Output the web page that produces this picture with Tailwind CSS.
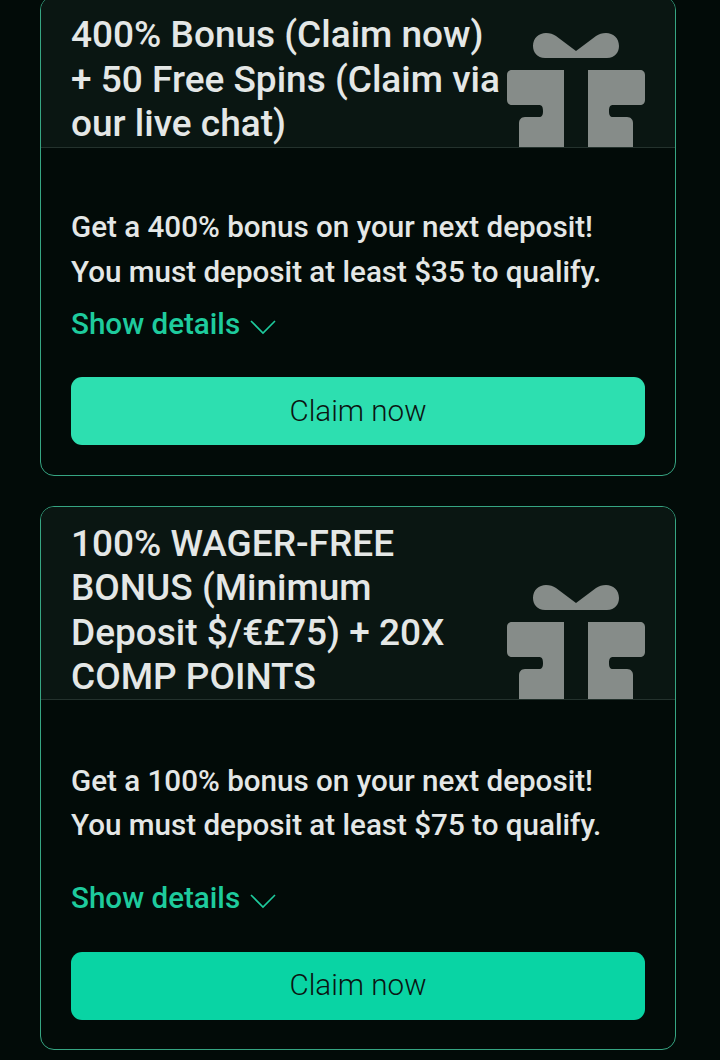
<!DOCTYPE html>
<html lang="en">
<head>
    <meta charset="UTF-8">
    <meta name="viewport" content="width=device-width, initial-scale=1.0">
    <title>Bonuses</title>
    <script src="https://cdn.jsdelivr.net/npm/@tailwindcss/browser@4"></script>
</head>
<body class="bg-[#020b08] font-['Roboto',sans-serif] text-[#e4e7e6]">
    <div class="h-[1060px] overflow-hidden px-[40px]">

        <!-- First bonus -->
        <div class="-mt-[4px] w-[636px] rounded-[14px] border border-[#36a582] overflow-hidden">
            <div class="flex items-end justify-between gap-[4px] bg-[#0a1612] border-b border-[#24322d] pl-[30px] pr-[30px] pt-[16px]">
                <h2 class="flex-1 text-[37px] leading-[44.5px] font-medium">400% Bonus (Claim now) + 50 Free Spins (Claim via our live chat)</h2>
                <svg class="w-[138px] h-[114px] shrink-0 block" viewBox="0 0 138 114" fill="#868c89">
                    <path d="M12 25 H38 L69 25 H100 C108 25 112 19 112 13 C112 5 106 0 99 0 C95 0 92 1 89 3 L69 18 L49 3 C46 1 43 0 39 0 C32 0 26 5 26 13 C26 19 30 25 38 25 Z"/>
                    <path d="M5 37 H57 V114 H12 V90 C12 87 14 84 18 84 H32 C35 84 36 82 36 78 C36 74 35 72 32 72 H5 C2 72 0 70 0 67 V42 C0 39 2 37 5 37 Z"/>
                    <path d="M133 37 H81 V114 H126 V90 C126 87 124 84 120 84 H106 C103 84 102 82 102 78 C102 74 103 72 106 72 H133 C136 72 138 70 138 67 V42 C138 39 136 37 133 37 Z"/>
                </svg>
            </div>
            <div class="px-[30px] pt-[57px] pb-[30px]">
                <p class="text-[29.6px] leading-[45px] font-medium">Get a 400% bonus on your next deposit!<br>You must deposit at least $35 to qualify.</p>
                <div class="mt-[7px] flex items-center gap-[10px] text-[#1ecb9d] text-[29.6px] leading-[45px] font-medium">
                    Show details
                    <svg class="w-[26px] h-[16px] mt-[5px]" viewBox="0 0 26 16" fill="none" stroke="currentColor" stroke-width="1.6"><path d="M1 2 L13 14 L25 2"/></svg>
                </div>
                <button class="mt-[30px] pt-[2px] block w-full h-[68px] rounded-[11px] bg-[#2ddfb0] text-[#0b1512] text-[29.6px] font-light">Claim now</button>
            </div>
        </div>

        <!-- Second bonus -->
        <div class="mt-[30px] w-[636px] rounded-[14px] border border-[#36a582] overflow-hidden">
            <div class="flex items-end justify-between gap-[4px] bg-[#0a1612] border-b border-[#24322d] pl-[30px] pr-[30px] pt-[15px]">
                <h2 class="flex-1 -mb-[1px] text-[37px] leading-[44.6px] font-medium">100% WAGER-FREE BONUS (Minimum Deposit $/€£75) + 20X COMP POINTS</h2>
                <svg class="w-[138px] h-[114px] shrink-0 block" viewBox="0 0 138 114" fill="#868c89">
                    <path d="M12 25 H38 L69 25 H100 C108 25 112 19 112 13 C112 5 106 0 99 0 C95 0 92 1 89 3 L69 18 L49 3 C46 1 43 0 39 0 C32 0 26 5 26 13 C26 19 30 25 38 25 Z"/>
                    <path d="M5 37 H57 V114 H12 V90 C12 87 14 84 18 84 H32 C35 84 36 82 36 78 C36 74 35 72 32 72 H5 C2 72 0 70 0 67 V42 C0 39 2 37 5 37 Z"/>
                    <path d="M133 37 H81 V114 H126 V90 C126 87 124 84 120 84 H106 C103 84 102 82 102 78 C102 74 103 72 106 72 H133 C136 72 138 70 138 67 V42 C138 39 136 37 133 37 Z"/>
                </svg>
            </div>
            <div class="px-[30px] pt-[59px] pb-[29px]">
                <p class="text-[29.6px] leading-[44.5px] font-medium">Get a 100% bonus on your next deposit!<br>You must deposit at least $75 to qualify.</p>
                <div class="mt-[28px] flex items-center gap-[10px] text-[#1ecb9d] text-[29.6px] leading-[45px] font-medium">
                    Show details
                    <svg class="w-[26px] h-[16px] mt-[5px]" viewBox="0 0 26 16" fill="none" stroke="currentColor" stroke-width="1.6"><path d="M1 2 L13 14 L25 2"/></svg>
                </div>
                <button class="mt-[31px] pb-[2px] block w-full h-[68px] rounded-[11px] bg-[#09d4a4] text-[#0b1512] text-[29.6px] font-light">Claim now</button>
            </div>
        </div>

    </div>
</body>
</html>
